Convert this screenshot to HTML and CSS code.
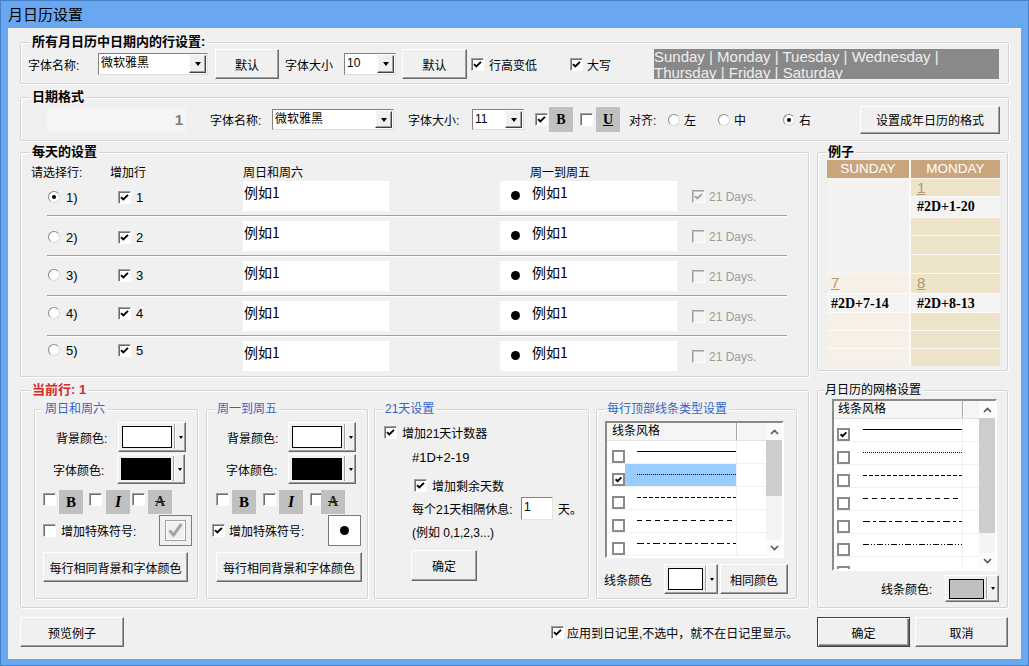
FILE: index.html
```html
<!DOCTYPE html>
<html lang="zh-CN">
<head>
<meta charset="utf-8">
<title>月日历设置</title>
<link rel="stylesheet" href="styles.css">
</head>
<body>
<div class="window">
  <div class="titlebar">月日历设置</div>
  <div class="client">

    <section class="group g1">
      <div class="legend">所有月日历中日期内的行设置:</div>
      <span class="lbl g1-name">字体名称:</span>
      <div class="combo g1-font"><span class="ctext">微软雅黑</span><span class="cdrop"></span></div>
      <div class="btn g1-def1">默认</div>
      <span class="lbl g1-size">字体大小</span>
      <div class="combo g1-sz"><span class="ctext">10</span><span class="cdrop"></span></div>
      <div class="btn g1-def2">默认</div>
      <div class="chk g1-low"><span class="cb"><svg class="tick" viewBox="0 0 11 11"><path d="M2 5.2l2.3 2.3L9 2.8"/></svg></span>行高变低</div>
      <div class="chk g1-cap"><span class="cb"><svg class="tick" viewBox="0 0 11 11"><path d="M2 5.2l2.3 2.3L9 2.8"/></svg></span>大写</div>
      <div class="daysbox">Sunday | Monday | Tuesday | Wednesday | Thursday | Friday | Saturday</div>
    </section>

    <section class="group g2">
      <div class="legend">日期格式</div>
      <div class="numbox">1</div>
      <span class="lbl g2-name">字体名称:</span>
      <div class="combo g2-font"><span class="ctext">微软雅黑</span><span class="cdrop"></span></div>
      <span class="lbl g2-size">字体大小:</span>
      <div class="combo g2-sz"><span class="ctext">11</span><span class="cdrop"></span></div>
      <span class="cb g2-cb1"><svg class="tick" viewBox="0 0 11 11"><path d="M2 5.2l2.3 2.3L9 2.8"/></svg></span>
      <span class="sbox g2-b">B</span>
      <span class="cb g2-cb2"></span>
      <span class="sbox g2-u">U</span>
      <span class="lbl g2-align">对齐:</span>
      <span class="ropt al-l"><span class="rb"></span>左</span>
      <span class="ropt al-c"><span class="rb"></span>中</span>
      <span class="ropt al-r"><span class="rb on"></span>右</span>
      <div class="btn g2-btn">设置成年日历的格式</div>
    </section>

    <div class="mid">
      <section class="group daily">
        <div class="legend">每天的设置</div>
        <div class="dhead"><span class="dh-sel">请选择行:</span><span class="dh-add">增加行</span><span class="dh-we">周日和周六</span><span>周一到周五</span></div>
        <div class="drows">
          <div class="drow">
            <div class="dsel"><span class="rb on"></span>1)</div>
            <div class="dadd"><span class="cb"><svg class="tick" viewBox="0 0 11 11"><path d="M2 5.2l2.3 2.3L9 2.8"/></svg></span>1</div>
            <div class="wbox1">例如1</div>
            <div class="wbox2"><span class="dot"></span><span class="wtext">例如1</span></div>
            <div class="d21"><span class="cb dis"><svg class="tick gray" viewBox="0 0 11 11"><path d="M2 5.2l2.3 2.3L9 2.8"/></svg></span>21 Days.</div>
          </div>
          <div class="drow">
            <div class="dsel"><span class="rb"></span>2)</div>
            <div class="dadd"><span class="cb"><svg class="tick" viewBox="0 0 11 11"><path d="M2 5.2l2.3 2.3L9 2.8"/></svg></span>2</div>
            <div class="wbox1">例如1</div>
            <div class="wbox2"><span class="dot"></span><span class="wtext">例如1</span></div>
            <div class="d21"><span class="cb dis"></span>21 Days.</div>
          </div>
          <div class="drow r3">
            <div class="dsel"><span class="rb"></span>3)</div>
            <div class="dadd"><span class="cb"><svg class="tick" viewBox="0 0 11 11"><path d="M2 5.2l2.3 2.3L9 2.8"/></svg></span>3</div>
            <div class="wbox1">例如1</div>
            <div class="wbox2"><span class="dot"></span><span class="wtext">例如1</span></div>
            <div class="d21"><span class="cb dis"></span>21 Days.</div>
          </div>
          <div class="drow r4">
            <div class="dsel"><span class="rb"></span>4)</div>
            <div class="dadd"><span class="cb"><svg class="tick" viewBox="0 0 11 11"><path d="M2 5.2l2.3 2.3L9 2.8"/></svg></span>4</div>
            <div class="wbox1">例如1</div>
            <div class="wbox2"><span class="dot"></span><span class="wtext">例如1</span></div>
            <div class="d21"><span class="cb dis"></span>21 Days.</div>
          </div>
          <div class="drow r5">
            <div class="dsel"><span class="rb"></span>5)</div>
            <div class="dadd"><span class="cb"><svg class="tick" viewBox="0 0 11 11"><path d="M2 5.2l2.3 2.3L9 2.8"/></svg></span>5</div>
            <div class="wbox1">例如1</div>
            <div class="wbox2"><span class="dot"></span><span class="wtext">例如1</span></div>
            <div class="d21"><span class="cb dis"></span>21 Days.</div>
          </div>
        </div>
      </section>

      <section class="group example">
        <div class="legend">例子</div>
        <div class="cal">
          <div class="calcol sun">
            <div class="calhead">SUNDAY</div>
            <div class="cell blank"></div>
            <div class="cell num cream h19">7</div>
            <div class="cell txt h18">#2D+7-14</div>
            <div class="cell cream h17"></div>
            <div class="cell cream h17"></div>
            <div class="cell cream h17"></div>
          </div>
          <div class="calcol mon">
            <div class="calhead">MONDAY</div>
            <div class="cell num tan h17">1</div>
            <div class="cell txt h20">#2D+1-20</div>
            <div class="cell tan h17"></div>
            <div class="cell tan h18"></div>
            <div class="cell tan h18"></div>
            <div class="cell num tan h19">8</div>
            <div class="cell txt h18">#2D+8-13</div>
            <div class="cell tan h17"></div>
            <div class="cell tan h17"></div>
            <div class="cell tan h17"></div>
          </div>
        </div>
      </section>
    </div>

    <div class="bot">
      <section class="group cur">
        <div class="legend">当前行: 1</div>

        <section class="group sub sub1">
          <div class="legend">周日和周六</div>
          <div class="crow crow1"><span class="lbl">背景颜色:</span><span class="cbtn"><span class="sw white"></span><span class="csep"></span><span class="carr"></span></span></div>
          <div class="crow crow2"><span class="lbl">字体颜色:</span><span class="cbtn"><span class="sw black"></span><span class="csep"></span><span class="carr"></span></span></div>
          <div class="srow">
            <span class="cb"></span><span class="sbox sb-b">B</span>
            <span class="cb c2"></span><span class="sbox sb-i">I</span>
            <span class="cb c3"></span><span class="sbox sb-a">A</span>
          </div>
          <div class="symrow">
            <span class="cb"></span><span class="symlbl">增加特殊符号:</span>
            <span class="symbox grayed"><svg width="21" height="21" viewBox="0 0 21 21"><rect x="0.5" y="0.5" width="20" height="20" fill="#f0f0f0" stroke="#a0a0a0"/><rect x="1.5" y="1.5" width="18" height="18" fill="none" stroke="#fff"/><path d="M4.5 10.5l4 4.5 8-11" fill="none" stroke="#a5a5a5" stroke-width="3"/></svg></span>
          </div>
          <div class="btn samebtn">每行相同背景和字体颜色</div>
        </section>

        <section class="group sub sub2">
          <div class="legend">周一到周五</div>
          <div class="crow crow1"><span class="lbl">背景颜色:</span><span class="cbtn"><span class="sw white"></span><span class="csep"></span><span class="carr"></span></span></div>
          <div class="crow crow2"><span class="lbl">字体颜色:</span><span class="cbtn"><span class="sw black"></span><span class="csep"></span><span class="carr"></span></span></div>
          <div class="srow">
            <span class="cb"></span><span class="sbox sb-b">B</span>
            <span class="cb c2"></span><span class="sbox sb-i">I</span>
            <span class="cb c3"></span><span class="sbox sb-a">A</span>
          </div>
          <div class="symrow">
            <span class="cb"><svg class="tick" viewBox="0 0 11 11"><path d="M2 5.2l2.3 2.3L9 2.8"/></svg></span><span class="symlbl">增加特殊符号:</span>
            <span class="symbox white"><span class="dot"></span></span>
          </div>
          <div class="btn samebtn">每行相同背景和字体颜色</div>
        </section>

        <section class="group sub sub3">
          <div class="legend">21天设置</div>
          <div class="t1"><span class="cb"><svg class="tick" viewBox="0 0 11 11"><path d="M2 5.2l2.3 2.3L9 2.8"/></svg></span>增加21天计数器</div>
          <div class="t2">#1D+2-19</div>
          <div class="t3"><span class="cb"><svg class="tick" viewBox="0 0 11 11"><path d="M2 5.2l2.3 2.3L9 2.8"/></svg></span>增加剩余天数</div>
          <div class="t4"><span class="lbl t4-lbl">每个21天相隔休息:</span><span class="input">1</span><span class="t4-unit">天。</span></div>
          <div class="t5">(例如 0,1,2,3...)</div>
          <div class="btn ok1">确定</div>
        </section>

        <section class="group sub sub4">
          <div class="legend">每行顶部线条类型设置</div>
          <div class="list l1">
            <div class="lmain">
              <div class="lhead"><span class="lh1">线条风格</span><span class="lh2"></span></div>
              <div class="lrow"><span class="lcb"></span><span class="lline"><svg width="99" height="1"><line x1="0" y1="0.5" x2="99" y2="0.5" stroke="#000"/></svg></span></div>
              <div class="lrow sel"><span class="lcb"><svg class="tick" viewBox="0 0 11 11"><path d="M2 5.2l2.3 2.3L9 2.8"/></svg></span><span class="lline"><svg width="99" height="1"><line x1="0" y1="0.5" x2="99" y2="0.5" stroke="#000" stroke-dasharray="1 1"/></svg></span></div>
              <div class="lrow"><span class="lcb"></span><span class="lline"><svg width="99" height="1"><line x1="0" y1="0.5" x2="99" y2="0.5" stroke="#000" stroke-dasharray="4 2"/></svg></span></div>
              <div class="lrow"><span class="lcb"></span><span class="lline"><svg width="99" height="1"><line x1="0" y1="0.5" x2="99" y2="0.5" stroke="#000" stroke-dasharray="5 4"/></svg></span></div>
              <div class="lrow"><span class="lcb"></span><span class="lline"><svg width="99" height="1"><line x1="0" y1="0.5" x2="99" y2="0.5" stroke="#000" stroke-dasharray="7 3 3 3"/></svg></span></div>
            </div>
            <div class="vsb">
              <span class="sbtn"><svg width="9" height="6" viewBox="0 0 9 6"><path d="M1 5l3.5-3.5L8 5" fill="none" stroke="#555" stroke-width="1.6"/></svg></span>
              <span class="thumb t-a"></span>
              <span class="strack"></span>
              <span class="sbtn dn"><svg width="9" height="6" viewBox="0 0 9 6"><path d="M1 1l3.5 3.5L8 1" fill="none" stroke="#555" stroke-width="1.6"/></svg></span>
            </div>
          </div>
          <div class="lcolor"><span class="lbl lc-lbl">线条颜色</span><span class="cbtn small"><span class="sw white"></span><span class="csep"></span><span class="carr"></span></span><div class="btn samecolor">相同颜色</div></div>
        </section>
      </section>

      <section class="group grid">
        <div class="legend">月日历的网格设置</div>
        <div class="list l2">
          <div class="lmain">
            <div class="lhead"><span class="lh1">线条风格</span><span class="lh2"></span></div>
            <div class="lrow"><span class="lcb"><svg class="tick" viewBox="0 0 11 11"><path d="M2 5.2l2.3 2.3L9 2.8"/></svg></span><span class="lline"><svg width="99" height="1"><line x1="0" y1="0.5" x2="99" y2="0.5" stroke="#000"/></svg></span></div>
            <div class="lrow"><span class="lcb"></span><span class="lline"><svg width="99" height="1"><line x1="0" y1="0.5" x2="99" y2="0.5" stroke="#000" stroke-dasharray="1 1"/></svg></span></div>
            <div class="lrow"><span class="lcb"></span><span class="lline"><svg width="99" height="1"><line x1="0" y1="0.5" x2="99" y2="0.5" stroke="#000" stroke-dasharray="4 2"/></svg></span></div>
            <div class="lrow"><span class="lcb"></span><span class="lline"><svg width="99" height="1"><line x1="0" y1="0.5" x2="99" y2="0.5" stroke="#000" stroke-dasharray="5 4"/></svg></span></div>
            <div class="lrow"><span class="lcb"></span><span class="lline"><svg width="99" height="1"><line x1="0" y1="0.5" x2="99" y2="0.5" stroke="#000" stroke-dasharray="7 3 3 3"/></svg></span></div>
            <div class="lrow"><span class="lcb"></span><span class="lline"><svg width="99" height="1"><line x1="0" y1="0.5" x2="99" y2="0.5" stroke="#000" stroke-dasharray="6 2 1 2 1 2"/></svg></span></div>
            <div class="lrow"><span class="lcb"></span><span class="lline"></span></div>
          </div>
          <div class="vsb">
            <span class="sbtn"><svg width="9" height="6" viewBox="0 0 9 6"><path d="M1 5l3.5-3.5L8 5" fill="none" stroke="#555" stroke-width="1.6"/></svg></span>
            <span class="thumb t-b"></span>
            <span class="strack"></span>
            <span class="sbtn dn"><svg width="9" height="6" viewBox="0 0 9 6"><path d="M1 1l3.5 3.5L8 1" fill="none" stroke="#555" stroke-width="1.6"/></svg></span>
          </div>
        </div>
        <div class="gcolor"><span class="lbl gc-lbl">线条颜色:</span><span class="cbtn small short"><span class="sw gray"></span><span class="csep"></span><span class="carr"></span></span></div>
      </section>
    </div>

    <div class="foot">
      <div class="btn preview">预览例子</div>
      <div class="chk apply"><span class="cb"><svg class="tick" viewBox="0 0 11 11"><path d="M2 5.2l2.3 2.3L9 2.8"/></svg></span>应用到日记里,不选中，就不在日记里显示。</div>
      <div class="btn okbtn">确定</div>
      <div class="btn cancel">取消</div>
    </div>

  </div>
</div>
</body>
</html>
```

FILE: styles.css
```css
* { box-sizing: border-box; }
html, body { margin: 0; padding: 0; }
body {
  font-family: "Liberation Sans", "Noto Sans CJK SC", sans-serif;
  font-size: 12px;
  color: #000;
  background: #69a8f0;
}
.window {
  width: 1029px;
  height: 666px;
  background: #69a8f0;
  padding: 0 8px 7px 8px;
  display: flex;
  flex-direction: column;
  box-shadow: inset 0 0 0 1px #4580c8;
}
.titlebar {
  height: 28px;
  flex: none;
  display: flex;
  align-items: center;
  font-family: "Noto Sans CJK SC", sans-serif;
  font-size: 15px;
  padding-bottom: 1px;
}
.client {
  flex: 1;
  background: #f0f0f0;
  padding: 14px 12px 0 12px;
  display: flex;
  flex-direction: column;
}

/* group boxes */
.group {
  position: relative;
  flex: none;
  border: 1px solid #d5d5d5;
  border-radius: 2px;
  box-shadow: inset 1px 1px #fff, 1px 1px #fff;
}
.legend {
  position: absolute;
  top: -9px;
  left: 9px;
  padding: 0 2px;
  background: #f0f0f0;
  line-height: 16px;
  font-size: 13px;
  font-weight: bold;
  white-space: nowrap;
}

/* basic controls */
.lbl { flex: none; white-space: nowrap; }
.combo {
  flex: none;
  display: flex;
  height: 22px;
  background: #fff;
  border: 1px solid;
  border-color: #828282 #dcdcdc #dcdcdc #828282;
}
.ctext {
  flex: 1;
  padding-left: 2px;
  line-height: 19px;
  white-space: nowrap;
  overflow: hidden;
  font-size: 12px;
}
.cdrop {
  flex: none;
  width: 17px;
  margin: 1px;
  background: #f0f0f0;
  border: 1px solid;
  border-color: #f0f0f0 #404040 #404040 #fff;
  box-shadow: inset -1px -1px #a0a0a0;
  display: flex;
  align-items: center;
  justify-content: center;
}
.cdrop::after {
  content: "";
  border-style: solid;
  border-width: 4px 3.5px 0 3.5px;
  border-color: #000 transparent transparent transparent;
}
.btn {
  flex: none;
  display: flex;
  align-items: center;
  justify-content: center;
  background: #f0f0f0;
  border: 1px solid;
  border-color: #fff #696969 #696969 #fff;
  box-shadow: inset -1px -1px #a0a0a0;
  white-space: nowrap;
  height: 30px;
}
.cb {
  flex: none;
  width: 13px;
  height: 13px;
  background: #fff;
  border: 1px solid;
  border-color: #a0a0a0 #fff #fff #a0a0a0;
  box-shadow: inset 1px 1px #6e6e6e;
  display: inline-flex;
}
.cb.dis {
  background: #f4f4f4;
  box-shadow: inset 1px 1px #c4c4c4;
}
.tick { width: 11px; height: 11px; display: block; }
.tick path { fill: none; stroke: #000; stroke-width: 1.9; }
.tick.gray path { stroke: #a0a0a0; }
.rb {
  flex: none;
  width: 12px;
  height: 12px;
  border-radius: 50%;
  background: #fff;
  border: 1px solid;
  border-color: #8a8a8a #dadada #dadada #8a8a8a;
  display: inline-flex;
  align-items: center;
  justify-content: center;
}
.rb.on::after {
  content: "";
  width: 4px;
  height: 4px;
  border-radius: 50%;
  background: #000;
}
.chk { flex: none; display: flex; align-items: center; white-space: nowrap; }
.sbox {
  flex: none;
  width: 24px;
  height: 24px;
  background: #c0c0c0;
  display: flex;
  align-items: center;
  justify-content: center;
  font-family: "Liberation Serif", serif;
  font-weight: bold;
  font-size: 15px;
}
.dot {
  flex: none;
  width: 9px;
  height: 9px;
  border-radius: 50%;
  background: #000;
}

/* group 1 */
.g1 {
  height: 42px;
  display: flex;
  align-items: center;
  padding: 2px 0 0 7px;
}
.g1-name { width: 70px; }
.g1-font { width: 110px; }
.g1-def1 { width: 64px; margin-left: 7px; }
.g1-size { width: 65px; padding-left: 6px; }
.g1-sz { width: 52px; }
.g1-def2 { width: 65px; margin-left: 6px; }
.g1-low { width: 99px; margin-left: 4px; gap: 5px; }
.g1-cap { width: 84px; gap: 4px; }
.daysbox {
  flex: none;
  width: 345px;
  height: 30px;
  background: #898989;
  color: #efefef;
  font-family: "Liberation Sans", sans-serif;
  font-size: 15px;
  line-height: 16px;
  overflow: hidden;
}

/* group 2 */
.g2 {
  height: 44px;
  margin-top: 13px;
  display: flex;
  align-items: center;
  padding: 1px 8px 0 26px;
}
.numbox {
  flex: none;
  width: 139px;
  height: 24px;
  background: #f5f5f5;
  text-align: right;
  padding-right: 3px;
  font-weight: bold;
  font-size: 15px;
  line-height: 24px;
  color: #7c7c7c;
}
.g2-name { width: 62px; margin-left: 24px; }
.g2-font { width: 122px; height: 21px; }
.g2-size { width: 64px; margin-left: 14px; }
.g2-sz { width: 52px; height: 21px; }
.g2-cb1 { margin-left: 11px; }
.g2-b { margin-left: 1px; height: 25px; font-size: 14px; }
.g2-cb2 { margin-left: 7px; }
.g2-u { margin-left: 3px; height: 25px; font-size: 14px; text-decoration: underline; }
.g2-align { width: 39px; margin-left: 9px; }
.ropt { flex: none; display: flex; align-items: center; gap: 4px; }
.al-l { width: 50px; }
.al-c { width: 65px; }
.g2-btn { width: 140px; height: 28px; margin-left: auto; }

/* middle row */
.mid { display: flex; gap: 8px; margin-top: 11px; align-items: flex-start; }
.daily { width: 789px; height: 225px; padding: 13px 0 0 10px; }
.dhead { display: flex; height: 15px; line-height: 15px; white-space: nowrap; }
.dh-sel { width: 79px; }
.dh-add { width: 133px; }
.dh-we { width: 287px; }
.drows { margin-left: 16px; width: 740px; }
.drow {
  display: flex;
  align-items: flex-start;
  height: 35px;
  border-bottom: 1px solid #a0a0a0;
  box-shadow: 0 1px #fff;
  margin-bottom: 5px;
}
.drow:last-child { border-bottom: 0; box-shadow: none; }
.dsel {
  flex: none;
  width: 71px;
  height: 12px;
  margin-top: 10px;
  padding-left: 1px;
  display: flex;
  align-items: center;
  gap: 6px;
  font-size: 13px;
}
.dadd {
  flex: none;
  width: 125px;
  height: 13px;
  margin-top: 10px;
  display: flex;
  align-items: center;
  gap: 5px;
  font-size: 13px;
}
.r3 .dsel, .r3 .dadd { margin-top: 8px; }
.r4 .dsel, .r4 .dadd { margin-top: 6px; }
.r5 .dsel, .r5 .dadd { margin-top: 3px; }
.wbox1 {
  flex: none;
  width: 146px;
  height: 30px;
  background: #fff;
  font-family: "Noto Sans CJK SC", sans-serif;
  font-size: 14px;
  line-height: 16px;
  padding: 3px 0 0 1px;
}
.wbox2 {
  flex: none;
  width: 177px;
  height: 30px;
  margin-left: 111px;
  background: #fff;
  display: flex;
  align-items: flex-start;
  padding-left: 11px;
}
.wbox2 .dot { margin-top: 10px; }
.wtext {
  margin-left: 12px;
  font-family: "Noto Sans CJK SC", sans-serif;
  font-size: 14px;
  line-height: 16px;
  padding-top: 3px;
}
.d21 {
  flex: none;
  margin-left: 15px;
  margin-top: 9px;
  height: 13px;
  display: flex;
  align-items: center;
  gap: 4px;
  color: #9c9c9c;
  white-space: nowrap;
}

/* example */
.example { width: 191px; height: 219px; padding: 7px 0 0 9px; }
.example .legend { left: 8px; }
.cal { display: flex; gap: 2px; width: 173px; background: #fbfaf8; }
.calcol { display: flex; flex-direction: column; gap: 1px; }
.sun { width: 82px; }
.mon { width: 89px; }
.calhead {
  height: 18px;
  background: #c9a57b;
  color: #fff;
  font-size: 13.5px;
  line-height: 18px;
  text-align: center;
}
.cell { flex: none; }
.blank { height: 94px; background: #f3f2f1; }
.cream { background: #f7f0e7; }
.tan { background: #ede3c8; }
.h17 { height: 17px; }
.h18 { height: 18px; }
.h19 { height: 19px; }
.h20 { height: 20px; }
.num {
  color: #b39672;
  text-decoration: underline;
  font-size: 15px;
  line-height: 17px;
  padding-left: 6px;
}
.sun .num { padding-left: 4px; }
.txt {
  background: #f4f4f4;
  font-family: "Liberation Serif", serif;
  font-weight: bold;
  font-size: 14px;
  line-height: 19px;
  padding-left: 6px;
  white-space: nowrap;
}
.sun .txt { padding-left: 4px; }

/* bottom row */
.bot { display: flex; gap: 8px; margin-top: 13px; height: 218px; }
.cur {
  width: 789px;
  height: 218px;
  padding: 18px 0 0 13px;
  display: flex;
  align-items: flex-start;
}
.cur > .legend { color: #d42a2a; }
.sub { height: 190px; display: flex; flex-direction: column; }
.sub > .legend {
  left: 8px;
  font-weight: normal;
  font-size: 12px;
  color: #3565c9;
}
.sub1 { width: 164px; }
.sub2 { width: 162px; margin-left: 8px; }
.sub3 { width: 215px; margin-left: 6px; padding-left: 9px; }
.sub4 { width: 201px; margin-left: 7px; }

.crow { display: flex; align-items: center; height: 30px; }
.crow1 { margin-top: 12px; }
.crow2 { margin-top: 2px; }
.sub1 .crow1 { padding-left: 21px; }
.sub1 .crow1 .lbl { width: 62px; }
.sub1 .crow2 { padding-left: 18px; }
.sub1 .crow2 .lbl { width: 64px; }
.sub2 .crow1 { padding-left: 20px; }
.sub2 .crow1 .lbl { width: 61px; }
.sub2 .crow2 { padding-left: 19px; }
.sub2 .crow2 .lbl { width: 62px; }

.cbtn {
  flex: none;
  width: 68px;
  height: 30px;
  display: flex;
  align-items: center;
  padding-left: 3px;
  background: #f0f0f0;
  border: 1px solid;
  border-color: #fff #696969 #696969 #fff;
  box-shadow: inset -1px -1px #a0a0a0;
}
.sw { flex: none; width: 50px; height: 22px; border: 1px solid #000; }
.sw.white { background: #fff; }
.sw.black { background: #000; }
.sw.gray { background: #c0c0c0; }
.csep {
  flex: none;
  width: 2px;
  align-self: stretch;
  margin: 1px 0 2px 2px;
  border-left: 1px solid #a0a0a0;
  border-right: 1px solid #fff;
}
.carr { flex: 1; display: flex; align-items: center; justify-content: center; }
.carr::after {
  content: "";
  border-style: solid;
  border-width: 3px 2.5px 0 2.5px;
  border-color: #000 transparent transparent transparent;
}
.cbtn.small { width: 54px; }
.cbtn.small .sw { width: 35px; }
.cbtn.short { height: 27px; }
.cbtn.short .sw { height: 20px; }

.srow { display: flex; align-items: center; height: 24px; margin-top: 6px; }
.srow .cb { align-self: flex-start; margin-top: 3px; }
.sub1 .srow { padding-left: 8px; }
.sub2 .srow { padding-left: 9px; }
.sb-b { margin-left: 3px; }
.sub1 .c2 { margin-left: 6px; }
.sub2 .c2 { margin-left: 7px; }
.sb-i { margin-left: 4px; font-style: italic; font-size: 16px; }
.sub2 .sb-i { margin-left: 3px; }
.sub1 .c3 { margin-left: 2px; }
.sub2 .c3 { margin-left: 7px; }
.sb-a { margin-left: 3px; text-decoration: line-through; font-size: 14px; color: #1c2a1c; }
.sub2 .sb-a { margin-left: -2px; }

.symrow { display: flex; align-items: center; height: 31px; margin-top: 1px; }
.sub1 .symrow { padding: 0 5px 0 8px; }
.sub2 .symrow { padding: 0 6px 0 5px; }
.symlbl { margin-left: 5px; white-space: nowrap; }
.sub2 .symlbl { margin-left: 4px; }
.symbox {
  flex: none;
  width: 33px;
  height: 31px;
  margin-left: auto;
  border: 1px solid #7a7a7a;
  display: flex;
  align-items: center;
  justify-content: center;
}
.symbox.grayed { background: #f0f0f0; }
.symbox.white { background: #fff; }
.samebtn { margin-top: 6px; }
.sub1 .samebtn { margin-left: 8px; width: 145px; }
.sub2 .samebtn { margin-left: 9px; width: 146px; }

/* 21 days */
.t1 { display: flex; align-items: center; gap: 5px; margin-top: 14px; height: 16px; white-space: nowrap; }
.t2 { margin-top: 10px; height: 16px; line-height: 16px; padding-left: 28px; font-size: 13px; }
.t3 { display: flex; align-items: center; gap: 5px; margin-top: 11px; height: 16px; padding-left: 30px; }
.t4 { display: flex; align-items: center; margin-top: 4px; height: 23px; padding-left: 28px; }
.t4-lbl { width: 109px; }
.input {
  flex: none;
  width: 32px;
  height: 23px;
  background: #fff;
  border: 1px solid;
  border-color: #828282 #e3e3e3 #e3e3e3 #828282;
  padding-left: 2px;
  line-height: 19px;
}
.t4-unit { margin-left: 5px; }
.t5 { margin-top: 5px; padding-left: 28px; height: 16px; line-height: 16px; white-space: nowrap; }
.ok1 { margin-top: 9px; margin-left: 27px; width: 66px; height: 31px; }

/* list views */
.list {
  flex: none;
  display: flex;
  background: #fff;
  border: 2px solid;
  border-color: #8a8a8a #fff #fff #8a8a8a;
  overflow: hidden;
}
.lmain { flex: 1; min-width: 0; display: flex; flex-direction: column; overflow: hidden; }
.lhead {
  flex: none;
  display: flex;
  height: 18px;
  background: #f5f5f5;
  border-bottom: 1px solid #e2e2e2;
}
.lh1 {
  flex: none;
  border-right: 1px solid #a8a8a8;
  box-shadow: 1px 0 #fff;
  line-height: 17px;
  white-space: nowrap;
}
.lh2 { flex: 1; }
.lrow { flex: none; display: flex; height: 23px; border-bottom: 1px solid #f0f0f0; }
.lcb {
  flex: none;
  width: 13px;
  height: 13px;
  margin-top: 9px;
  border: 2px solid #8a8a8a;
  background: #fff;
  display: flex;
}
.lcb .tick { width: 9px; height: 9px; }
.lcb .tick path { stroke-width: 2.2; }
.lline {
  flex: none;
  height: 22px;
  border-right: 1px solid #f0f0f0;
  display: flex;
  align-items: flex-start;
}
.lline svg { display: block; margin-top: 10px; }
.lrow.sel .lline { background: #99ccff; }
.vsb { flex: none; width: 16px; display: flex; flex-direction: column; background: #f4f4f4; }
.sbtn { flex: none; height: 17px; display: flex; align-items: center; justify-content: center; background: #fbfbfb; }
.sbtn.dn { height: 16px; }
.thumb { flex: none; background: #cdcdcd; }
.t-a { height: 56px; }
.t-b { height: 115px; }
.strack { flex: 1; }

.l1 { width: 179px; height: 137px; margin: 11px 0 0 8px; }
.l1 .lh1 { width: 130px; padding-left: 5px; }
.l1 .lcb { margin-left: 5px; }
.l1 .lline { width: 112px; padding-left: 12px; }
.lcolor { display: flex; align-items: center; margin-top: 6px; height: 30px; padding-left: 7px; }
.lc-lbl { width: 60px; }
.samecolor { width: 68px; margin-left: 2px; }

/* grid settings */
.grid { width: 191px; height: 218px; padding: 8px 0 0 14px; display: flex; flex-direction: column; }
.grid > .legend { left: 5px; font-weight: normal; font-size: 12px; }
.l2 { width: 165px; height: 172px; }
.l2 .lh1 { width: 129px; padding-left: 4px; }
.l2 .lcb { margin-left: 3px; }
.l2 .lline { width: 113px; padding-left: 13px; }
.gcolor { display: flex; align-items: center; justify-content: flex-end; margin-top: 4px; height: 27px; padding-right: 8px; }
.gc-lbl { width: 64px; }

/* footer */
.foot { display: flex; align-items: center; margin-top: 9px; height: 30px; flex: none; }
.preview { width: 104px; }
.apply { width: 266px; margin-left: 427px; gap: 3px; }
.okbtn {
  width: 93px;
  border-color: #404040;
  box-shadow: inset 1px 1px #fff, inset -1px -1px #696969, inset -2px -2px #a0a0a0;
}
.cancel { width: 93px; margin-left: 5px; }
```
